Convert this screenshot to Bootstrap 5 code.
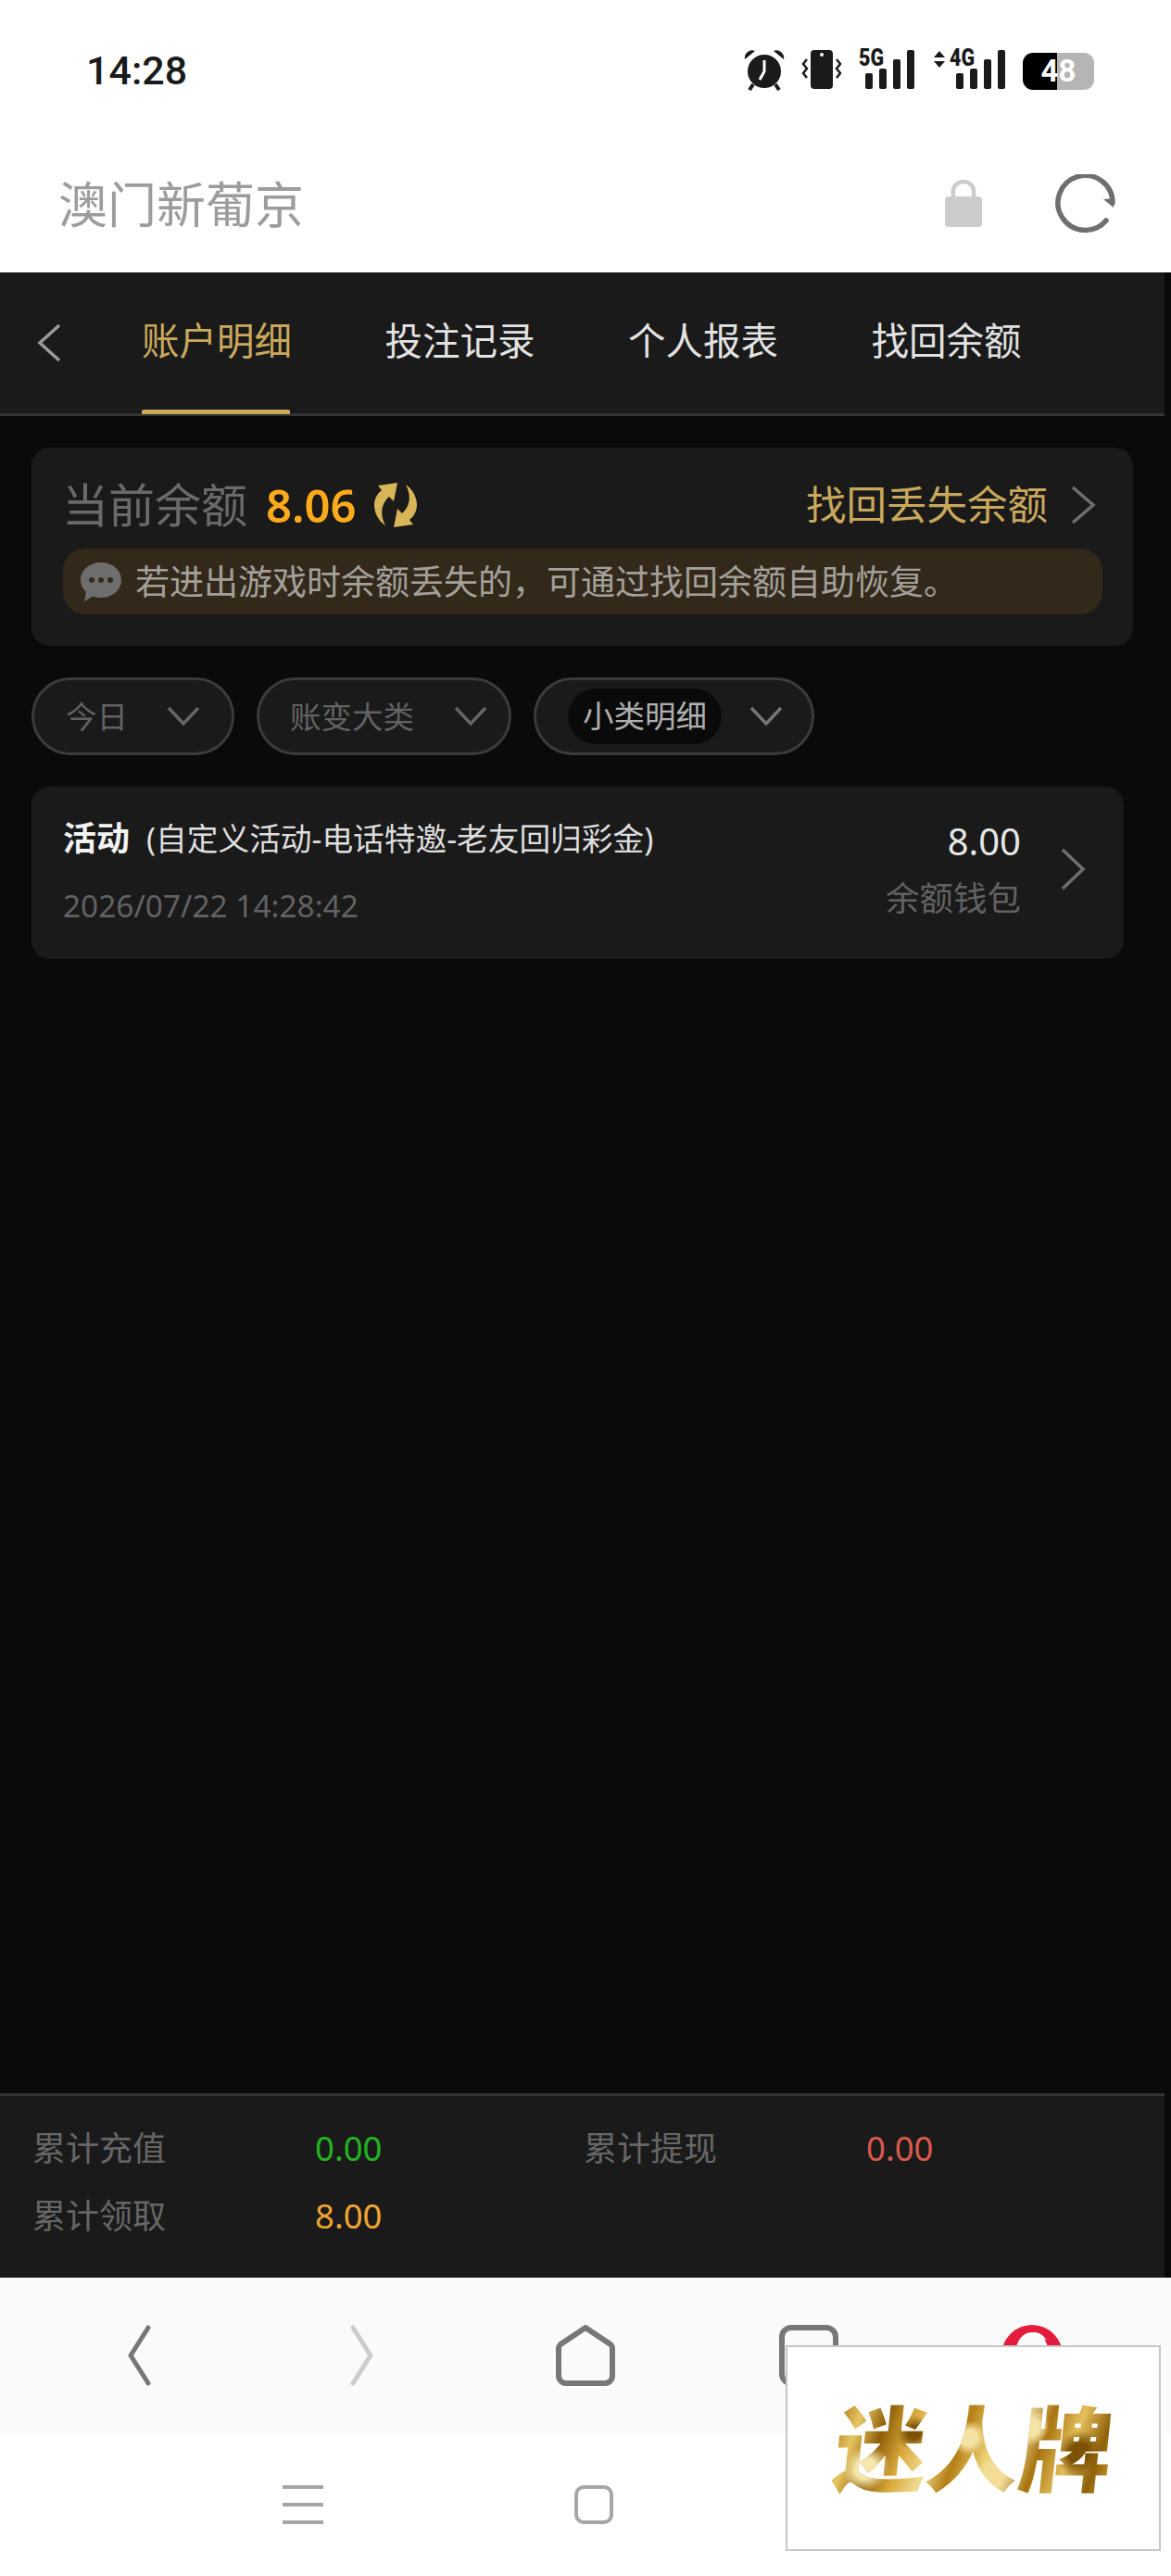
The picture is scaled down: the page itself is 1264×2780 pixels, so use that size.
<!DOCTYPE html>
<html lang="zh-CN">
<head>
    <meta charset="UTF-8">
    <meta name="viewport" content="width=device-width, initial-scale=1.0">
    <title>澳门新葡京</title>
    <link href="https://cdn.jsdelivr.net/npm/bootstrap@5.3.1/dist/css/bootstrap.min.css" rel="stylesheet">
    <style>
        body {
            background-color: #0a0a0a;
            font-family: "Noto Sans", "Noto Sans CJK SC", sans-serif;
        }
        .phone {
            width: 1264px;
            height: 2780px;
            overflow: hidden;
        }
        .status-bar {
            height: 146px;
            padding: 52px 83px 0 93px;
            background: #fff;
        }
        .status-time {
            font: 500 43px/1 Roboto, sans-serif;
            color: #1a1a1a;
            margin-top: 3px;
        }
        .status-icons { gap: 18px; }
        .net-icon { margin-top: -6px; }
        .battery {
            width: 77px;
            height: 40px;
            margin-top: 5px;
            border-radius: 11px;
            background: linear-gradient(90deg, #000 0 48%, #b5b5b5 48% 100%);
            font: 700 33px/40px Roboto, sans-serif;
            color: #fff;
            text-align: center;
        }
        .title-bar {
            height: 148px;
            background: #fff;
            padding: 0 59px 0 63px;
        }
        .title-text {
            font-size: 53px;
            font-weight: 400;
            color: #9c9c9c;
            line-height: 1;
        }
        .title-icons { gap: 79px; }
        .tab-bar {
            width: 1257px;
            height: 155px;
            background: #1a1a1a;
            border-bottom: 3px solid #333;
            padding-left: 40px;
        }
        .tab-back { width: 113px; }
        .tab-link {
            width: 160px;
            margin-right: 102.5px;
            height: 100%;
            line-height: 148px;
            font-size: 40.5px;
            font-weight: 400;
            color: #e2e2e2;
            white-space: nowrap;
            position: relative;
        }
        .tab-link.on { color: #c9a85c; }
        .tab-link.on::after {
            content: "";
            position: absolute;
            left: 0;
            right: 0;
            bottom: -1px;
            height: 5px;
            background: #c9a85c;
            border-radius: 2px 2px 0 0;
        }
        .page-body { padding: 34px 0 0 34px; }
        .balance-box {
            width: 1189px;
            height: 214px;
            background: #1a1a1a;
            border-radius: 20px;
            padding: 27px 40px 0 33px;
        }
        .balance-top { height: 70px; margin-bottom: 12px; }
        .balance-label {
            font-size: 50px;
            font-weight: 400;
            color: #6a6a6a;
            margin-right: 20px;
            line-height: 1;
        }
        .balance-num {
            font-size: 49px;
            font-weight: 600;
            color: #fdab1a;
            line-height: 1;
            margin-right: 17px;
        }
        .balance-find {
            font-size: 43.5px;
            font-weight: 400;
            color: #c9a85c;
            margin-right: 24px;
            white-space: nowrap;
        }
        .notice-row {
            height: 71px;
            background: #33291b;
            border-radius: 24px;
            padding-left: 19px;
            margin-left: 1px;
            margin-right: -7px;
        }
        .notice-text {
            font-size: 37px;
            font-weight: 400;
            color: #a3a09a;
            margin-left: 15px;
            white-space: nowrap;
        }
        .filter-row {
            gap: 24px;
            margin: 34px 0;
        }
        .filter-pill {
            height: 84px;
            background: #1a1a1a;
            border: 3px solid #3b3b3b;
            border-radius: 42px;
            font-size: 33.5px;
            font-weight: 400;
            color: #626262;
            white-space: nowrap;
        }
        .pill-today { width: 219px; padding: 0 34px; }
        .pill-type { width: 275px; padding: 0 23px 0 33px; }
        .pill-detail { width: 303px; padding: 0 31px 0 34px; }
        .filter-pick {
            background: #0a0a0a;
            color: #b0b0b0;
            border-radius: 30px;
            height: 60px;
            line-height: 58px;
            padding: 0 16px;
        }
        .record-box {
            width: 1179px;
            height: 186px;
            background: #1a1a1a;
            border-radius: 20px;
            padding: 30px 41px 0 34px;
        }
        .record-main {
            font-size: 33.7px;
            font-weight: 400;
            color: #dedede;
            line-height: 52px;
            white-space: nowrap;
        }
        .record-main b {
            font-size: 36px;
            font-weight: 700;
            color: #f2f2f2;
            margin-right: 18px;
        }
        .record-date {
            font-size: 33.4px;
            font-weight: 400;
            color: #626262;
            line-height: 44px;
            margin-top: 24px;
        }
        .record-amount {
            font-size: 40px;
            font-weight: 400;
            color: #e6e6e6;
            line-height: 52px;
            margin-top: 3px;
        }
        .record-wallet {
            font-size: 36.5px;
            font-weight: 400;
            color: #626262;
            line-height: 52px;
            margin-top: 9px;
        }
        .record-arrow { margin-left: 42px; margin-top: 36px; }
        .sum-bar {
            width: 1257px;
            height: 199px;
            background: #1a1a1a;
            border-top: 3px solid #333;
            padding: 20px 0 0 35px;
        }
        .sum-grid {
            display: grid;
            grid-template-columns: 305px 290px 305px 1fr;
            grid-auto-rows: 73px;
            align-items: center;
            font-size: 36px;
            font-weight: 400;
            color: #666;
        }
        .sum-val { font-size: 36.5px; }
        .sum-green { color: #22b322; }
        .sum-red { color: #d9594c; }
        .sum-orange { color: #f0a531; }
        .browser-bar {
            height: 168px;
            background: #fafafa;
            padding: 0 30px;
        }
        .browser-slot { flex: 1; text-align: center; }
        .sys-nav {
            height: 154px;
            background: #fff;
            padding: 0 0 0 170px;
        }
        .sys-slot { width: 314px; text-align: center; }
        .promo-box {
            position: absolute;
            right: 11px;
            bottom: 27px;
            width: 405px;
            height: 222px;
            background: #fff;
            border: 2px solid #c6c6c6;
        }
        .promo-text {
            font-size: 100px;
            font-weight: 900;
            line-height: 1.1;
            transform: skewX(-6deg);
            white-space: nowrap;
            background:
                radial-gradient(circle at 12% 70%, #f6e7ad 0 4%, transparent 9%),
                radial-gradient(circle at 28% 35%, #7d5206 0 3%, transparent 8%),
                radial-gradient(circle at 48% 40%, #f4e2a4 0 5%, transparent 11%),
                radial-gradient(circle at 58% 75%, #f3dd96 0 5%, transparent 10%),
                radial-gradient(circle at 70% 30%, #f4e3a6 0 4%, transparent 9%),
                radial-gradient(circle at 88% 55%, #7d5206 0 4%, transparent 9%),
                linear-gradient(105deg, #a8740f 0%, #e7c462 9%, #8f5f08 18%, #d9a83a 27%, #f1dc92 36%, #b57f14 45%, #eccf73 55%, #f5e4a8 62%, #a9740f 72%, #e3bf5c 82%, #8f6109 92%, #d6a63a 100%);
            -webkit-background-clip: text;
            background-clip: text;
            color: transparent;
        }
    </style>
</head>
<body>

<div class="phone position-relative d-flex flex-column">

    <!-- status bar -->
    <div class="status-bar d-flex justify-content-between align-items-start">
        <div class="status-time">14:28</div>
        <div class="status-icons d-flex align-items-start">
            <svg width="44" height="46" viewBox="0 0 44 46" class="d-block">
                <circle cx="22" cy="25" r="18" fill="#1a1a1a"/>
                <path d="M22 13v12l-5 9" fill="none" stroke="#fff" stroke-width="3"/>
                <path d="M1 12a8 8 0 0 1 11-9zM43 12a8 8 0 0 0-11-9z" fill="#1a1a1a"/>
                <path d="M10 39l-4 6M34 39l4 6" stroke="#1a1a1a" stroke-width="4"/>
            </svg>
            <svg width="44" height="44" viewBox="0 0 44 44" class="d-block">
                <rect x="10" y="2" width="24" height="42" rx="4" fill="#1a1a1a"/>
                <circle cx="22" cy="7" r="2" fill="#fff"/>
                <path d="M6 12l-4 5 4 5-4 5 4 5M38 12l4 5-4 5 4 5-4 5" fill="none" stroke="#1a1a1a" stroke-width="2.500"/>
            </svg>
            <svg width="62" height="50" viewBox="0 -6 62 50" class="d-block net-icon">
                <text x="0" y="19" font-family="Roboto, sans-serif" font-weight="900" font-size="25" fill="#1a1a1a" textLength="27" lengthAdjust="spacingAndGlyphs">5G</text>
                <rect x="7" y="27" width="8" height="17" rx="2" fill="#1a1a1a"/>
                <rect x="22" y="22" width="8" height="22" rx="2" fill="#1a1a1a"/>
                <rect x="37" y="12" width="8" height="32" rx="2" fill="#1a1a1a"/>
                <rect x="52" y="2" width="8" height="42" rx="2" fill="#1a1a1a"/>
            </svg>
            <svg width="79" height="50" viewBox="0 -6 79 50" class="d-block net-icon">
                <path d="M1 10l6-7 6 7zM1 14l6 7 6-7z" fill="#1a1a1a"/>
                <text x="18" y="19" font-family="Roboto, sans-serif" font-weight="900" font-size="25" fill="#1a1a1a" textLength="27" lengthAdjust="spacingAndGlyphs">4G</text>
                <rect x="25" y="27" width="8" height="17" rx="2" fill="#1a1a1a"/>
                <rect x="40" y="22" width="8" height="22" rx="2" fill="#1a1a1a"/>
                <rect x="55" y="12" width="8" height="32" rx="2" fill="#1a1a1a"/>
                <rect x="70" y="2" width="8" height="42" rx="2" fill="#1a1a1a"/>
            </svg>
            <div class="battery">48</div>
        </div>
    </div>

    <!-- site title -->
    <div class="title-bar d-flex justify-content-between align-items-center">
        <div class="title-text">澳门新葡京</div>
        <div class="title-icons d-flex align-items-center">
            <svg width="40" height="52" viewBox="0 0 40 52" class="d-block">
                <path d="M9 20v-8a11 10 0 0 1 22 0v8" fill="none" stroke="#ccc" stroke-width="4.500"/>
                <rect x="0" y="18" width="40" height="33" rx="4" fill="#ccc"/>
            </svg>
            <svg width="66" height="64" viewBox="0 0 66 64" class="d-block">
                <path d="M55 50A29.500 29.500 0 1 1 62 31" fill="none" stroke="#6f6f6f" stroke-width="5.500" stroke-linecap="round"/>
                <path d="M52 27l12-1-1 10z" fill="#6f6f6f"/>
            </svg>
        </div>
    </div>

    <!-- tabs -->
    <div class="tab-bar d-flex align-items-center">
        <div class="tab-back">
            <svg width="26" height="42" viewBox="0 0 26 42" class="d-block">
                <path d="M24 2L3 21l21 19" fill="none" stroke="#9a9a9a" stroke-width="3.5"/>
            </svg>
        </div>
        <div class="tab-link on">账户明细</div>
        <div class="tab-link">投注记录</div>
        <div class="tab-link">个人报表</div>
        <div class="tab-link">找回余额</div>
    </div>

    <div class="page-body flex-grow-1">

        <!-- balance -->
        <div class="balance-box">
            <div class="balance-top d-flex align-items-center">
                <span class="balance-label">当前余额</span>
                <span class="balance-num">8.06</span>
                <svg width="50" height="50" viewBox="0 0 50 50" class="d-block">
                    <path d="M14 47C1 38-3 19 10 9L6 4l21-3-4 20-5-5C9 24 8 36 14 47z" fill="#d8b558"/>
                    <path d="M36 3c13 9 17 28 4 38l4 5-21 3 4-20 5 5c9-8 10-20 4-31z" fill="#d8b558"/>
                </svg>
                <span class="balance-find ms-auto">找回丢失余额</span>
                <svg width="28" height="42" viewBox="0 0 28 42" class="d-block">
                    <path d="M3 2l22 19L3 40" fill="none" stroke="#6f6f6f" stroke-width="3.5"/>
                </svg>
            </div>
            <div class="notice-row d-flex align-items-center">
                <svg width="44" height="42" viewBox="0 0 44 42" class="d-block flex-shrink-0">
                    <path d="M22 0c12 0 22 8 22 19S34 38 22 38c-3 0-6-.5-9-1.500L4 42l2-10C2 28 0 24 0 19 0 8 10 0 22 0z" fill="#6e6e6e"/>
                    <circle cx="12" cy="19" r="3" fill="#33291b"/>
                    <circle cx="22" cy="19" r="3" fill="#33291b"/>
                    <circle cx="32" cy="19" r="3" fill="#33291b"/>
                </svg>
                <span class="notice-text">若进出游戏时余额丢失的，可通过找回余额自助恢复。</span>
            </div>
        </div>

        <!-- filters -->
        <div class="filter-row d-flex">
            <div class="filter-pill pill-today d-flex align-items-center">
                <span class="flex-grow-1">今日</span>
                <svg width="36" height="22" viewBox="0 0 36 22" class="d-block flex-shrink-0">
                    <path d="M2 2l16 17L34 2" fill="none" stroke="#666" stroke-width="3.5"/>
                </svg>
            </div>
            <div class="filter-pill pill-type d-flex align-items-center">
                <span class="flex-grow-1">账变大类</span>
                <svg width="36" height="22" viewBox="0 0 36 22" class="d-block flex-shrink-0">
                    <path d="M2 2l16 17L34 2" fill="none" stroke="#666" stroke-width="3.5"/>
                </svg>
            </div>
            <div class="filter-pill pill-detail d-flex align-items-center">
                <div class="flex-grow-1"><span class="filter-pick d-inline-block">小类明细</span></div>
                <svg width="36" height="22" viewBox="0 0 36 22" class="d-block flex-shrink-0">
                    <path d="M2 2l16 17L34 2" fill="none" stroke="#777" stroke-width="3.5"/>
                </svg>
            </div>
        </div>

        <!-- record -->
        <div class="record-box d-flex">
            <div class="flex-grow-1">
                <div class="record-main"><b>活动</b>(自定义活动-电话特邀-老友回归彩金)</div>
                <div class="record-date">2026/07/22 14:28:42</div>
            </div>
            <div class="text-end">
                <div class="record-amount">8.00</div>
                <div class="record-wallet">余额钱包</div>
            </div>
            <svg width="28" height="46" viewBox="0 0 28 46" class="d-block record-arrow">
                <path d="M3 2l22 21L3 44" fill="none" stroke="#6f6f6f" stroke-width="3.5"/>
            </svg>
        </div>
    </div>

    <!-- totals -->
    <div class="sum-bar">
        <div class="sum-grid">
            <span>累计充值</span><span class="sum-val sum-green">0.00</span>
            <span>累计提现</span><span class="sum-val sum-red">0.00</span>
            <span>累计领取</span><span class="sum-val sum-orange">8.00</span>
        </div>
    </div>

    <!-- browser toolbar -->
    <div class="browser-bar d-flex align-items-center">
        <div class="browser-slot">
            <svg width="26" height="66" viewBox="0 0 26 66"><path d="M23 3L4 33l19 30" fill="none" stroke="#777" stroke-width="5" stroke-linecap="round" stroke-linejoin="round"/></svg>
        </div>
        <div class="browser-slot">
            <svg width="26" height="66" viewBox="0 0 26 66"><path d="M3 3l19 30L3 63" fill="none" stroke="#ccc" stroke-width="5" stroke-linecap="round" stroke-linejoin="round"/></svg>
        </div>
        <div class="browser-slot">
            <svg width="64" height="66" viewBox="0 0 64 66"><path d="M32 3L5 21c-1 1-2 3-2 4v30a8 8 0 0 0 8 8h42a8 8 0 0 0 8-8V25c0-1-1-3-2-4z" fill="none" stroke="#777" stroke-width="6" stroke-linejoin="round"/></svg>
        </div>
        <div class="browser-slot">
            <svg width="64" height="66" viewBox="0 0 64 66"><rect x="3" y="3" width="58" height="60" rx="10" fill="none" stroke="#777" stroke-width="6"/></svg>
        </div>
        <div class="browser-slot">
            <svg width="68" height="68" viewBox="0 0 68 68">
                <path fill-rule="evenodd" d="M34 1a33 33 0 1 0 0 66 33 33 0 1 0 0-66zM34 9c-11 0-18 11-18 25s7 25 18 25 18-11 18-25-7-25-18-25z" fill="#e31b3d"/>
                <path d="M36 9c7 0 11 4 14 9-4-3-9-5-15-5z" fill="#fff"/>
            </svg>
        </div>
    </div>

    <!-- system nav -->
    <div class="sys-nav d-flex align-items-center">
        <div class="sys-slot">
            <svg width="44" height="42" viewBox="0 0 44 42" class="d-block mx-auto">
                <path d="M0 2h44M0 21h44M0 40h44" stroke="#a6a6a6" stroke-width="4"/>
            </svg>
        </div>
        <div class="sys-slot">
            <svg width="42" height="42" viewBox="0 0 42 42" class="d-block mx-auto">
                <rect x="2" y="2" width="38" height="38" rx="8" fill="none" stroke="#a6a6a6" stroke-width="4"/>
            </svg>
        </div>
    </div>

    <!-- promo float -->
    <div class="promo-box d-flex align-items-center justify-content-center">
        <div class="promo-text">迷人牌</div>
    </div>
</div>

<script src="https://cdn.jsdelivr.net/npm/bootstrap@5.3.1/dist/js/bootstrap.bundle.min.js"></script>
</body>
</html>
